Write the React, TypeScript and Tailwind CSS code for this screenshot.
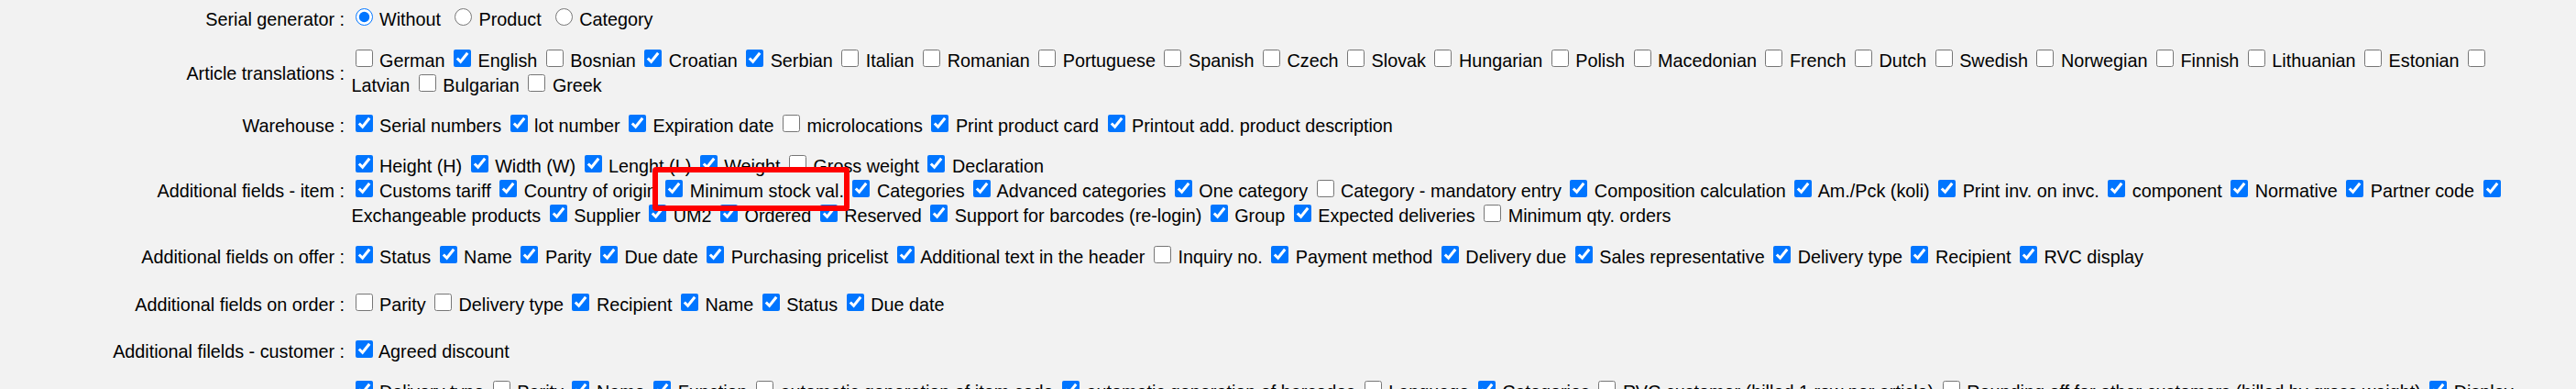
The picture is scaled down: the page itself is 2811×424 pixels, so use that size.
import { Fragment, type ReactNode } from "react";

type Opt = [string, boolean];

const translations: Opt[] = [
  ["German", false],
  ["English", true],
  ["Bosnian", false],
  ["Croatian", true],
  ["Serbian", true],
  ["Italian", false],
  ["Romanian", false],
  ["Portuguese", false],
  ["Spanish", false],
  ["Czech", false],
  ["Slovak", false],
  ["Hungarian", false],
  ["Polish", false],
  ["Macedonian", false],
  ["French", false],
  ["Dutch", false],
  ["Swedish", false],
  ["Norwegian", false],
  ["Finnish", false],
  ["Lithuanian", false],
  ["Estonian", false],
  ["Latvian", false],
  ["Bulgarian", false],
  ["Greek", false],
];

const warehouse: Opt[] = [
  ["Serial numbers", true],
  ["lot number", true],
  ["Expiration date", true],
  ["microlocations", false],
  ["Print product card", true],
  ["Printout add. product description", true],
];

const itemDims: Opt[] = [
  ["Height (H)", true],
  ["Width (W)", true],
  ["Lenght (L)", true],
  ["Weight", true],
  ["Gross weight", false],
  ["Declaration", true],
];

const itemBefore: Opt[] = [
  ["Customs tariff", true],
  ["Country of origin", true],
];

const itemAfter: Opt[] = [
  ["Categories", true],
  ["Advanced categories", true],
  ["One category", true],
  ["Category - mandatory entry", false],
  ["Composition calculation", true],
  ["Am./Pck (koli)", true],
  ["Print inv. on invc.", true],
  ["component", true],
  ["Normative", true],
  ["Partner code", true],
  ["Exchangeable products", true],
  ["Supplier", true],
  ["UM2", true],
  ["Ordered", true],
  ["Reserved", true],
  ["Support for barcodes (re-login)", true],
  ["Group", true],
  ["Expected deliveries", true],
  ["Minimum qty. orders", false],
];

const offer: Opt[] = [
  ["Status", true],
  ["Name", true],
  ["Parity", true],
  ["Due date", true],
  ["Purchasing pricelist", true],
  ["Additional text in the header", true],
  ["Inquiry no.", false],
  ["Payment method", true],
  ["Delivery due", true],
  ["Sales representative", true],
  ["Delivery type", true],
  ["Recipient", true],
  ["RVC display", true],
];

const order: Opt[] = [
  ["Parity", false],
  ["Delivery type", false],
  ["Recipient", true],
  ["Name", true],
  ["Status", true],
  ["Due date", true],
];

const customer: Opt[] = [["Agreed discount", true]];

const docItems: Opt[] = [
  ["Delivery type", true],
  ["Parity", false],
  ["Name", true],
  ["Function", true],
  ["automatic generation of item code", false],
  ["automatic generation of barcodes", true],
  ["Language", false],
  ["Categories", true],
  ["RVC customer (billed 1 row per article)", false],
  ["Rounding off for other customers (billed by gross weight)", false],
  ["Display", true],
  ["Discount", false],
  ["Note", true],
  ["Warranty", false],
];

function Check({ checked }: { checked: boolean }) {
  return (
    <input
      type="checkbox"
      defaultChecked={checked}
      className="m-0 mb-[1px] ml-[4px] mr-[2px] h-[19px] w-[19px] align-baseline"
    />
  );
}

function Radio({ checked }: { checked: boolean }) {
  return (
    <input
      type="radio"
      name="serial"
      defaultChecked={checked}
      className="m-0 mb-[1px] ml-[4px] mr-[2px] h-[19px] w-[19px] align-baseline"
    />
  );
}

function Options({ items }: { items: Opt[] }) {
  return (
    <>
      {items.map(([label, on], i) => (
        <Fragment key={i}>
          <Check checked={on} />
          {" "}
          {label}
          {" "}
        </Fragment>
      ))}
    </>
  );
}

function Row({
  label,
  pt,
  children,
}: {
  label: string;
  pt: string;
  children: ReactNode;
}) {
  return (
    <div className={`flex items-center ${pt}`}>
      <div className="w-[376px] shrink-0 whitespace-nowrap text-right">{label}</div>
      <div className="min-w-0 flex-1 pl-[7.5px] pr-[49px]">{children}</div>
    </div>
  );
}

export default function App() {
  return (
    <div className="h-[424px] overflow-hidden bg-[#f2f2f2] font-['Liberation_Sans',Arial,sans-serif] text-[19.8px] leading-[27px] text-black">
      <Row label="Serial generator :" pt="pt-[8px]">
        <Radio checked /> Without{"\u00a0"} <Radio checked={false} /> Product{"\u00a0"}{" "}
        <Radio checked={false} /> Category
      </Row>

      <Row label="Article translations :" pt="pt-[18px]">
        <Options items={translations} />
      </Row>

      <Row label="Warehouse :" pt="pt-[17px]">
        <Options items={warehouse} />
      </Row>

      <Row label="Additional fields - item :" pt="pt-[17px]">
        <Options items={itemDims} />
        <br />
        <Options items={itemBefore} />
        <span className="relative">
          <Check checked /> Minimum stock val.
          <span className="pointer-events-none absolute -bottom-[11px] -left-[10px] -right-[6px] -top-[15px] rounded-[4px] border-[6px] border-[#ff0000]" />
        </span>{" "}
        <Options items={itemAfter} />
      </Row>

      <Row label="Additional fields on offer :" pt="pt-[18px]">
        <Options items={offer} />
      </Row>

      <Row label="Additional fields on order :" pt="pt-[25px]">
        <Options items={order} />
      </Row>

      <Row label="Additional filelds - customer :" pt="pt-[24px]">
        <Options items={customer} />
      </Row>

      <Row label="Additional fields - document items :" pt="pt-[17px]">
        <Options items={docItems} />
      </Row>
    </div>
  );
}
